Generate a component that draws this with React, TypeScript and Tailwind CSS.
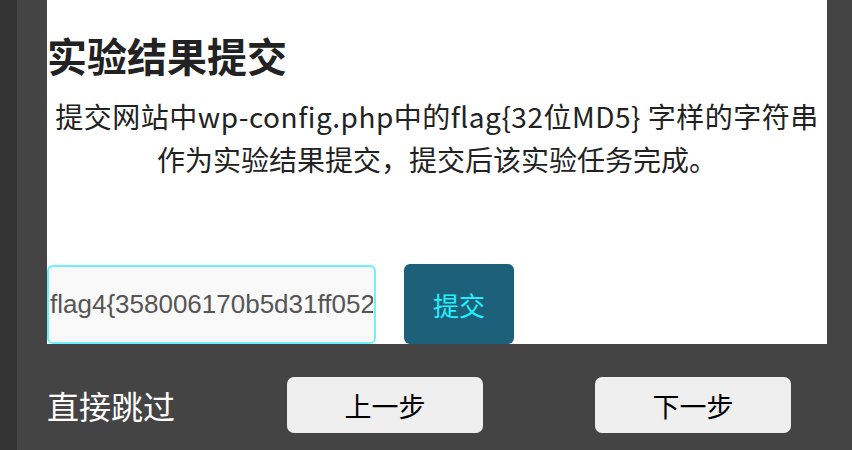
const cjk = "font-['Noto_Sans_CJK_SC',sans-serif]";

function NavButton({ label }: { label: string }) {
  return (
    <button
      type="button"
      className={`h-[56px] w-[196px] rounded-[7px] bg-[#efefef] text-[27px] leading-none text-black ${cjk}`}
    >
      {label}
    </button>
  );
}

export default function App() {
  return (
    <div className="flex h-[450px] w-[852px] overflow-hidden">
      <div className="w-[17px] shrink-0 bg-[#333333]" />
      <div className="flex-1 bg-[#444444] pl-[30px]">
        {/* 提交面板 */}
        <div className="w-[780px] bg-white">
          <h2
            className={`pt-[35px] text-[40px] font-bold leading-[40px] text-[#222] ${cjk}`}
          >
            实验结果提交
          </h2>
          <p
            className={`mt-[20px] text-center text-[28px] leading-[43px] text-[#222] ${cjk}`}
          >
            <span className="block whitespace-nowrap tracking-[0.5px]">
              提交网站中wp-config.php中的flag{'{'}32位MD5{'}'} 字样的字符串
            </span>
            <span className="block whitespace-nowrap">
              作为实验结果提交，提交后该实验任务完成。
            </span>
          </p>
          <div className="mt-[83px] flex items-end gap-[28px]">
            <input
              readOnly
              value="flag4{358006170b5d31ff0529c7e"
              className="h-[79px] w-[329px] rounded-[6px] border-2 border-[#6cf2ff] bg-[#f9f9f9] px-[1px] font-['Liberation_Sans',Arial,sans-serif] text-[26px] text-[#555] outline-none"
            />
            <button
              type="button"
              className={`h-[80px] w-[110px] rounded-[6px] bg-[#1c6179] text-[26px] text-[#22f0ff] ${cjk}`}
            >
              提交
            </button>
          </div>
        </div>

        {/* 底部导航 */}
        <div className="mt-[33px] flex items-center">
          <span className={`w-[240px] text-[32px] leading-none text-white ${cjk}`}>
            直接跳过
          </span>
          <div className="flex gap-[112px]">
            <NavButton label="上一步" />
            <NavButton label="下一步" />
          </div>
        </div>
      </div>
    </div>
  );
}
